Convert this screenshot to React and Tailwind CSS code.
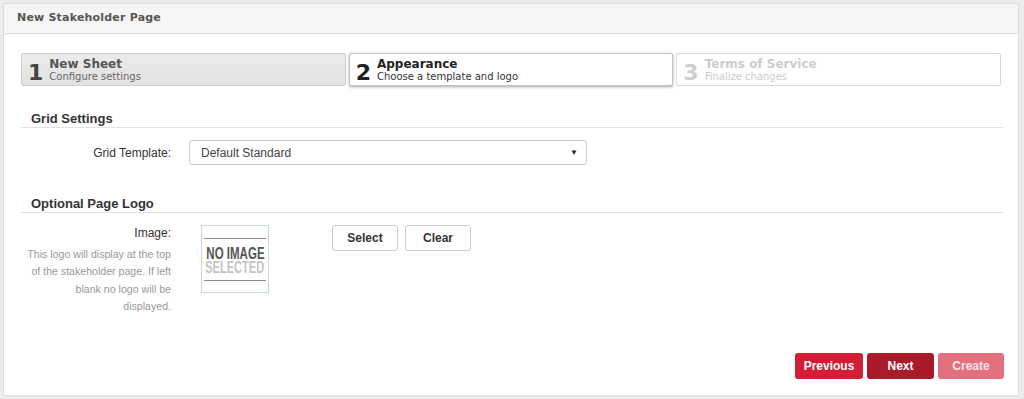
export default function App() {
  const verdana = { fontFamily: '"DejaVu Sans", Verdana, sans-serif' };
  const desc = ["This logo will display at the top", "of the stakeholder page. If left", "blank no logo will be", "displayed."];
  return (
    <div className="w-[1024px] h-[399px] bg-[#ececec] p-[3px]" style={{ fontFamily: '"Liberation Sans", Arial, sans-serif' }}>
      <div className="h-[393px] w-[1016px] bg-white border border-[#dcdcdc] flex flex-col">
        <div className="h-[30px] bg-[#f5f5f5] border-b border-[#dcdcdc] flex items-center pl-[13px] text-[11px] font-bold text-[#555] tracking-[0.2px]" style={verdana}>
          New Stakeholder Page
        </div>
        <div className="px-[17px] pt-[19px] flex-1 flex flex-col">
          {/* steps */}
          <div className="flex gap-[3px]" style={verdana}>
            <div className="w-[325px] h-[33px] border border-[#cfcfcf] rounded-[2px] bg-gradient-to-b from-[#ebebeb] to-[#e2e2e2] flex items-center pl-[6px]">
              <span className="text-[22px] font-bold text-[#444] leading-none mt-[6px]">1</span>
              <div className="ml-[6px] flex flex-col leading-none">
                <span className="text-[12px] font-bold text-[#555]">New Sheet</span>
                <span className="text-[10px] text-[#666] mt-[2px]">Configure settings</span>
              </div>
            </div>
            <div className="w-[325px] h-[33px] border border-[#c4c4c4] rounded-[2px] bg-white shadow-[0_1px_3px_rgba(0,0,0,0.35)] flex items-center pl-[6px]">
              <span className="text-[22px] font-bold text-[#222] leading-none mt-[6px]">2</span>
              <div className="ml-[6px] flex flex-col leading-none">
                <span className="text-[12px] font-bold text-[#222]">Appearance</span>
                <span className="text-[10px] text-[#333] mt-[2px]">Choose a template and logo</span>
              </div>
            </div>
            <div className="w-[325px] h-[33px] border border-[#dadada] rounded-[2px] bg-white flex items-center pl-[6px]">
              <span className="text-[22px] font-bold text-[#cfcfcf] leading-none mt-[6px]">3</span>
              <div className="ml-[6px] flex flex-col leading-none">
                <span className="text-[12px] font-bold text-[#cccccc]">Terms of Service</span>
                <span className="text-[10px] text-[#cccccc] mt-[2px]">Finalize changes</span>
              </div>
            </div>
          </div>

          {/* Grid settings */}
          <div className="mt-[25px] mr-[-2px] border-b border-[#e2e2e2] pl-[10px] text-[13px] font-bold text-[#333] leading-[16px]">
            Grid Settings
          </div>
          <div className="flex items-center mt-[12px]">
            <div className="w-[150px] text-right text-[12px] text-[#333]">Grid Template:</div>
            <div className="ml-[18px] w-[398px] h-[25px] border border-[#cccccc] rounded-[3px] flex items-center justify-between pl-[11px] pr-[8px] text-[12px] text-[#444]">
              <span>Default Standard</span>
              <span className="text-[8px] text-[#222]">▼</span>
            </div>
          </div>

          {/* Logo */}
          <div className="mt-[31px] mr-[-2px] border-b border-[#e2e2e2] pl-[10px] text-[13px] font-bold text-[#333] leading-[16px]">
            Optional Page Logo
          </div>
          <div className="flex mt-[12px]">
            <div className="w-[150px] flex flex-col items-end text-right">
              <div className="text-[12px] text-[#333] leading-[16px]">Image:</div>
              <div className="text-[10.6px] text-[#999] leading-[17.3px] mt-[5px] flex flex-col items-end">
                {desc.map((l) => (
                  <span key={l} className="whitespace-nowrap">{l}</span>
                ))}
              </div>
            </div>
            <div className="ml-[30px] w-[68px] h-[68px] border border-[#c9dcc9] flex flex-col items-center px-[2px] pt-[12px]">
              <div className="w-full h-px bg-[#8a8a8a]" />
              <div className="mt-[8px] h-[13px] w-full flex justify-center overflow-visible">
                <span className="inline-block whitespace-nowrap text-[16px] font-bold text-[#555] leading-[13px] scale-x-[0.72]">NO IMAGE</span>
              </div>
              <div className="mt-[1px] h-[13px] w-full flex justify-center overflow-visible">
                <span className="inline-block whitespace-nowrap text-[16px] font-bold text-[#c4c4c4] leading-[13px] scale-x-[0.69]">SELECTED</span>
              </div>
              <div className="w-full h-px bg-[#8a8a8a] mt-[6px]" />
            </div>
            <div className="ml-[63px] flex gap-[7px] items-start">
              <button className="w-[66px] h-[26px] border border-[#ccc] rounded-[3px] bg-white text-[12px] font-bold text-[#333]">Select</button>
              <button className="w-[66px] h-[26px] border border-[#ccc] rounded-[3px] bg-white text-[12px] font-bold text-[#333]">Clear</button>
            </div>
          </div>

          <div className="flex-1" />
          <div className="flex justify-end gap-[4px] mr-[-3px] pb-[16px]">
            <button className="w-[68px] h-[26px] rounded-[3px] bg-[#d31d36] text-white text-[12px] font-bold">Previous</button>
            <button className="w-[67px] h-[26px] rounded-[3px] bg-[#a91a2b] text-white text-[12px] font-bold">Next</button>
            <button className="w-[66px] h-[26px] rounded-[3px] bg-[#e2707f] text-[#fbe6e9] text-[12px] font-bold">Create</button>
          </div>
        </div>
      </div>
    </div>
  );
}
